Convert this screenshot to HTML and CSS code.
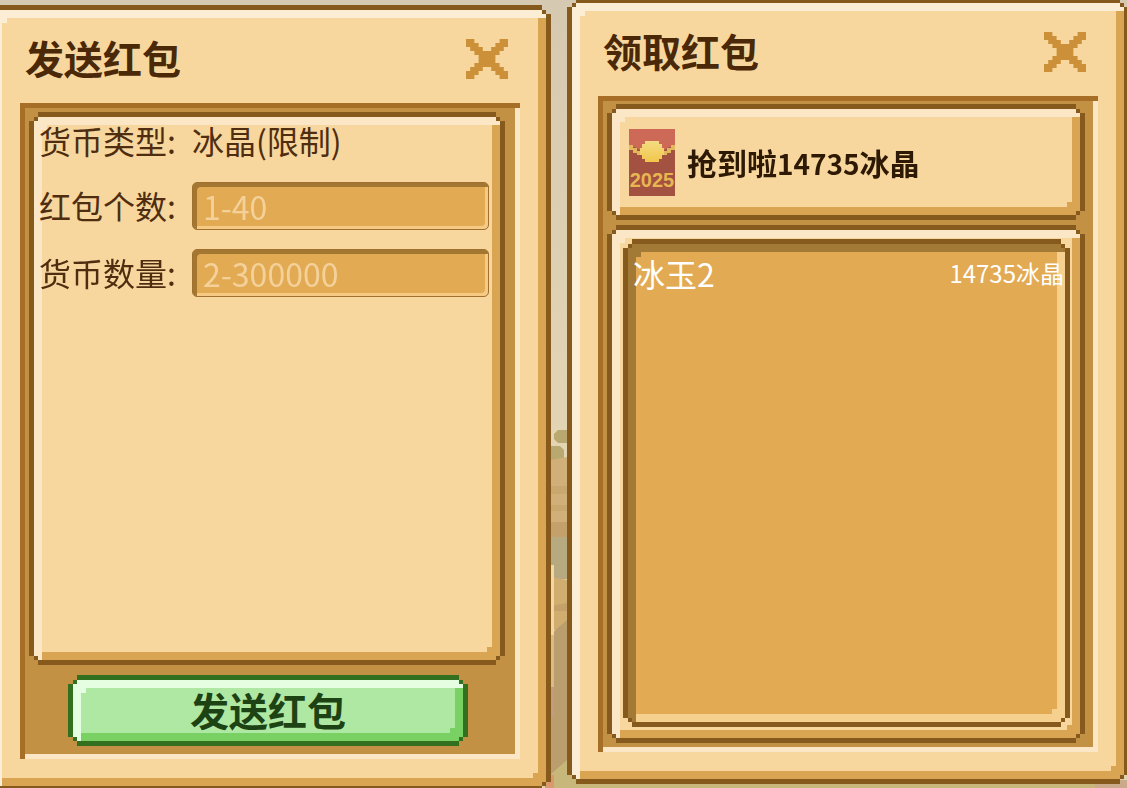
FILE: index.html
```
<!DOCTYPE html>
<html lang="zh-CN">
<head>
    <meta charset="UTF-8">
    <meta name="viewport" content="width=device-width, initial-scale=1.0">
    <title>红包</title>
    <link rel="stylesheet" href="styles.css">
</head>
<body>
    <svg class="scene" viewBox="0 0 1127 788" preserveAspectRatio="none" aria-hidden="true">
        <defs>
            <linearGradient id="sky" x1="0" y1="0" x2="0" y2="1">
                <stop offset="0" stop-color="#d6c9b1"/>
                <stop offset="1" stop-color="#e4d6b3"/>
            </linearGradient>
        </defs>
        <rect width="1127" height="470" fill="url(#sky)"/>
        <path d="M558 430h9v13h-9l-4-4v-5zM551 446h9l4 4v8l-4 3h-9z" fill="#b9a970"/>
        <path d="M551 460l16-3v80h-16z" fill="#d0b078"/>
        <path d="M551 486h16v8h-16zM551 505h16v6h-16z" fill="#c9a870"/>
        <path d="M551 522h16v15h-16z" fill="#c4a06a"/>
        <path d="M551 537h16v42h-16z" fill="#b8aa80"/>
        <path d="M551 577l16 3v50h-16z" fill="#d1ad70"/>
        <path d="M551 606l16-3v8h-16z" fill="#c3a168"/>
        <path d="M551 634l16-14v168h-16z" fill="#ba9e6d"/>
        <path d="M551 774l16-14 560 20v8H551z" fill="#c8b77a"/>
        <path d="M550 565h4v70h-4z" fill="#f3d7a0"/>
        <path d="M550 635h4v52h-4z" fill="#d9bb86"/>
        <path d="M550 687h4v30h-4z" fill="#c29a85"/>
        <path d="M545 775h9v13h-9z" fill="#d89a6c"/>
        <path d="M1095 780h32v8h-32z" fill="#cba98b"/>
    </svg>

    <main class="stage">
        <section class="frame panel panel-send">
            <div class="frame-body panel-body">
                <header class="panel-head">
                    <h2>发送红包</h2>
                    <button type="button" class="close" aria-label="关闭">
                        <svg viewBox="0 0 10 10" preserveAspectRatio="none">
                            <path d="M0 0h2v1h1v1h1v1h2V2h1V1h1V0h2v2H9v1H8v1H7v2h1v1h1v1h1v2H8V9H7V8H6V7H4v1H3v1H2v1H0V8h1V7h1V6h1V4H2V3H1V2H0z"/>
                        </svg>
                    </button>
                </header>
                <form class="tray">
                    <div class="frame card-fill">
                        <div class="frame-body fields">
                            <span>货币类型:</span>
                            <span>冰晶(限制)</span>
                            <label for="count">红包个数:</label>
                            <input type="text" id="count" placeholder="1-40">
                            <label for="amount">货币数量:</label>
                            <input type="text" id="amount" placeholder="2-300000">
                        </div>
                    </div>
                    <button type="button" class="frame send">
                        <span class="frame-body">发送红包</span>
                    </button>
                </form>
            </div>
        </section>

        <section class="frame panel panel-claim">
            <div class="frame-body panel-body">
                <header class="panel-head">
                    <h2>领取红包</h2>
                    <button type="button" class="close" aria-label="关闭">
                        <svg viewBox="0 0 10 10" preserveAspectRatio="none">
                            <path d="M0 0h2v1h1v1h1v1h2V2h1V1h1V0h2v2H9v1H8v1H7v2h1v1h1v1h1v2H8V9H7V8H6V7H4v1H3v1H2v1H0V8h1V7h1V6h1V4H2V3H1V2H0z"/>
                        </svg>
                    </button>
                </header>
                <div class="tray tray-claim">
                    <div class="frame">
                        <div class="frame-body notice">
                            <svg class="envelope" viewBox="0 0 46 67">
                                <defs>
                                    <linearGradient id="gold" x1="0" y1="0" x2="0" y2="1">
                                        <stop offset="0" stop-color="#f3dc83"/>
                                        <stop offset="1" stop-color="#f2c64b"/>
                                    </linearGradient>
                                </defs>
                                <rect width="46" height="67" fill="#a35140"/>
                                <path d="M0 0h46v18h-6l-8 5H14l-8-5H0z" fill="#cc6a57"/>
                                <path d="M0 16h4v3h4v3h5v4H8v-2H4v-3H0zM46 16h-4v3h-4v3h-5v4h5v-2h4v-3h4z" fill="#e3b85c"/>
                                <path d="M16 12h14v3h3v4h2v7h-2v4h-3v3H16v-3h-3v-4h-2v-7h2v-4h3z" fill="url(#gold)"/>
                                <text x="23" y="58" text-anchor="middle">2025</text>
                            </svg>
                            <strong>抢到啦<span>14735</span>冰晶</strong>
                        </div>
                    </div>
                    <div class="frame card-fill">
                        <div class="frame-body well-holder">
                            <div class="frame card-fill">
                                <ul class="frame-body well">
                                    <li><span class="name">冰玉2</span><span class="amount">14735冰晶</span></li>
                                </ul>
                            </div>
                        </div>
                    </div>
                </div>
            </div>
        </section>
    </main>
</body>
</html>
```

FILE: styles.css
```
* {
    box-sizing: border-box;
}
body {
    --outline: #865a1c;
    --light: #fbe6c6;
    --face: #f7d79e;
    --shade: #d9a552;
    margin: 0;
    overflow: hidden;
    background: #e0d2b2;
    color: #4f2d10;
    font-family: "Noto Sans CJK SC", sans-serif;
    font-size: 32px;
    line-height: 46px;
}
h2 {
    margin: 0;
    color: #4a2808;
    font-size: 39px;
    font-weight: 700;
}
button {
    border: none;
    padding: 0;
    font-family: inherit;
    cursor: pointer;
}
.scene {
    position: fixed;
    inset: 0;
    width: 100%;
    height: 100%;
    z-index: -1;
}
/* the outer edges of both panels run off the window */
.stage {
    display: grid;
    grid-template-columns: 1fr 1fr;
    align-items: start;
    gap: 16px;
    margin: 0 -2px 0 -11px;
}

/* Pixel frame: dark stepped outline round a bevelled face */
.frame {
    display: flex;
    flex-direction: column;
    padding: 5px;
    background: var(--outline);
    clip-path: polygon(
        9px 0, calc(100% - 9px) 0, calc(100% - 9px) 5px, calc(100% - 5px) 5px, calc(100% - 5px) 9px, 100% 9px,
        100% calc(100% - 9px), calc(100% - 5px) calc(100% - 9px), calc(100% - 5px) calc(100% - 5px), calc(100% - 9px) calc(100% - 5px), calc(100% - 9px) 100%,
        9px 100%, 9px calc(100% - 5px), 5px calc(100% - 5px), 5px calc(100% - 9px), 0 calc(100% - 9px),
        0 9px, 5px 9px, 5px 5px, 9px 5px
    );
}
.frame-body {
    flex: 1;
    background:
        linear-gradient(var(--light), var(--light)) 8px 8px / 5px 5px no-repeat,
        linear-gradient(var(--shade), var(--shade)) right 8px bottom 8px / 5px 5px no-repeat,
        var(--face);
    box-shadow: inset 8px 8px 0 var(--light), inset -8px -8px 0 var(--shade);
    clip-path: polygon(
        4px 0, calc(100% - 4px) 0, calc(100% - 4px) 4px, 100% 4px,
        100% calc(100% - 4px), calc(100% - 4px) calc(100% - 4px), calc(100% - 4px) 100%,
        4px 100%, 4px calc(100% - 4px), 0 calc(100% - 4px),
        0 4px, 4px 4px
    );
}
.card-fill {
    flex: 1;
}

.panel {
    min-height: calc(100vh - 2px);
}
.panel-send {
    margin-top: 5px;
}
.panel-claim {
    margin-top: -2px;
}
.panel-body {
    --light: #fbeed5;
    display: flex;
    flex-direction: column;
    padding: 0 26px 27px;
}
.panel-head {
    display: flex;
    align-items: center;
    justify-content: space-between;
    height: 93px;
    padding: 4px 12px 0 5px;
}
.panel-head h2 {
    margin-bottom: 4px;
}
.close {
    width: 42px;
    height: 40px;
    background: none;
}
.close svg {
    display: block;
    width: 100%;
    height: 100%;
    fill: #cc9138;
}

.tray {
    --light: #fbe6c6;
    flex: 1;
    display: flex;
    flex-direction: column;
    gap: 10px;
    padding: 9px 15px 13px 9px;
    background: #c39144;
    box-shadow: inset 5px 5px 0 #a66e26, inset -5px -5px 0 #fbe6c6;
}
.tray-claim {
    gap: 5px;
    padding: 8px 13px 9px 9px;
}

.fields {
    display: grid;
    grid-template-columns: 153px 1fr;
    align-content: start;
    row-gap: 19px;
    padding: 0 11px 12px 5px;
}
.fields input {
    width: 100%;
    min-width: 0;
    height: 48px;
    padding: 0 10px;
    border: 1px solid #a0702f;
    border-radius: 5px;
    background: #e2aa52;
    box-shadow: inset 4px 4px 0 #a37632, inset -3px -3px 0 #f6ca85;
    color: #fbe6c6;
    font: inherit;
}
.fields input::placeholder {
    color: #f4d19a;
    opacity: 1;
}

.send {
    --outline: #32701f;
    --light: #e5fde0;
    --face: #aee8a3;
    --shade: #79d164;
    height: 71px;
    margin: 0 37px 0 39px;
    color: #1d4314;
    font-size: 39px;
    font-weight: 700;
}
.send .frame-body {
    line-height: 58px;
}

.notice {
    display: flex;
    align-items: center;
    gap: 12px;
    min-height: 106px;
    padding: 0 17px;
    color: #2e1a04;
    font-size: 30px;
}
.notice span {
    font-size: 28px;
}
.envelope {
    flex: none;
    width: 46px;
    height: 67px;
}
.envelope text {
    fill: #e8b650;
    font-family: "Liberation Sans", sans-serif;
    font-size: 20px;
    font-weight: 700;
}

.well-holder {
    display: flex;
    flex-direction: column;
    padding: 9px 10px 11px 11px;
}
.well {
    --light: #a37936;
    --face: #e2aa52;
    --shade: #f6d08f;
    margin: 0;
    padding: 6px 1px 8px 5px;
    list-style: none;
    color: #fff;
}
.well li {
    display: flex;
    align-items: center;
    justify-content: space-between;
}
.well .amount {
    font-size: 24px;
}
```
